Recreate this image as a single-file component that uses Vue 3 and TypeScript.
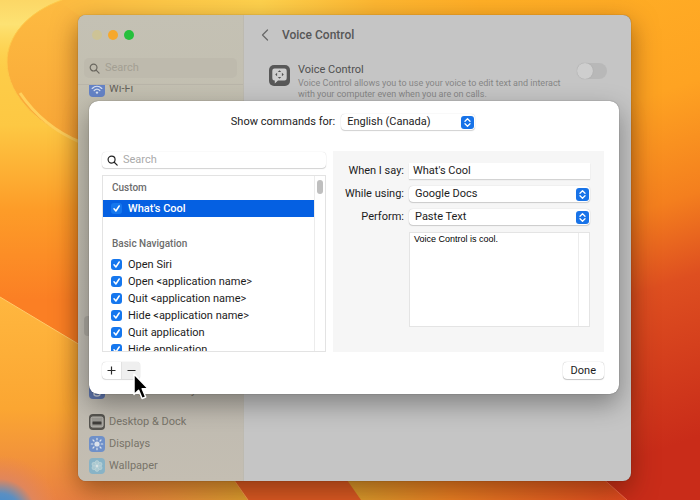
<script setup lang="ts">
import { ref } from 'vue'

interface Command {
  name: string
  enabled: boolean
}
interface CommandGroup {
  title: string
  commands: Command[]
}

const groups = ref<CommandGroup[]>([
  { title: 'Custom', commands: [{ name: "What's Cool", enabled: true }] },
  {
    title: 'Basic Navigation',
    commands: [
      { name: 'Open Siri', enabled: true },
      { name: 'Open <application name>', enabled: true },
      { name: 'Quit <application name>', enabled: true },
      { name: 'Hide <application name>', enabled: true },
      { name: 'Quit application', enabled: true },
      { name: 'Hide application', enabled: true },
    ],
  },
])

const selected = ref("What's Cool")
const language = ref('English (Canada)')
const phrase = ref("What's Cool")
const appName = ref('Google Docs')
const action = ref('Paste Text')
const pasteText = ref('Voice Control is cool.')
const voiceControl = ref(false)
</script>

<template>
  <div class="desktop">
    <svg class="wallpaper" viewBox="0 0 700 500" preserveAspectRatio="none" aria-hidden="true">
      <defs>
        <linearGradient id="base" x1="0" y1="0" x2="0" y2="1">
          <stop offset="0" stop-color="#fdd24e" />
          <stop offset=".25" stop-color="#fdc843" />
          <stop offset=".42" stop-color="#fd9c28" />
          <stop offset=".6" stop-color="#fb7f24" />
        </linearGradient>
        <linearGradient id="topband" x1="60" y1="0" x2="480" y2="0" gradientUnits="userSpaceOnUse">
          <stop offset="0" stop-color="#fdbb41" />
          <stop offset=".25" stop-color="#fdc847" />
          <stop offset=".48" stop-color="#fed24d" />
          <stop offset=".75" stop-color="#fdb731" />
          <stop offset="1" stop-color="#ffae26" />
        </linearGradient>
        <linearGradient id="blob" x1="0" y1="0" x2="0" y2="1">
          <stop offset="0" stop-color="#fdbb41" />
          <stop offset="1" stop-color="#f9a637" />
        </linearGradient>
        <linearGradient id="right" x1="0" y1="0" x2=".15" y2="1">
          <stop offset="0" stop-color="#ffb026" />
          <stop offset=".3" stop-color="#fea322" />
          <stop offset=".52" stop-color="#f47f1e" />
          <stop offset=".68" stop-color="#de4f20" />
          <stop offset="1" stop-color="#c92c19" />
        </linearGradient>
        <linearGradient id="lower" x1="0" y1="297" x2="0" y2="500" gradientUnits="userSpaceOnUse">
          <stop offset="0" stop-color="#ffb73f" />
          <stop offset=".55" stop-color="#fba632" />
          <stop offset="1" stop-color="#ea8242" />
        </linearGradient>
        <linearGradient id="floor" x1="78" y1="0" x2="248" y2="0" gradientUnits="userSpaceOnUse">
          <stop offset="0" stop-color="#ee9440" stop-opacity="0" />
          <stop offset="1" stop-color="#dfa32f" />
        </linearGradient>
        <linearGradient id="bottom" x1="0" y1="0" x2="1" y2="0">
          <stop offset="0" stop-color="#d9a62f" />
          <stop offset=".4" stop-color="#ec8124" />
          <stop offset="1" stop-color="#e04a20" />
        </linearGradient>
        <radialGradient id="corner" cx="0" cy="515" r="60" gradientUnits="userSpaceOnUse">
          <stop offset="0" stop-color="#2f8ad8" />
          <stop offset=".36" stop-color="#5b8fc2" />
          <stop offset=".6" stop-color="#e0865c" />
          <stop offset="1" stop-color="#ea8650" stop-opacity="0" />
        </radialGradient>
        <linearGradient id="glow" x1="0" y1="0" x2="0" y2="1">
          <stop offset="0" stop-color="#fcd766" />
          <stop offset=".35" stop-color="#fde273" />
          <stop offset="1" stop-color="#fdd24e" stop-opacity="0" />
        </linearGradient>
      </defs>
      <rect width="700" height="500" fill="url(#base)" />
      <rect width="80" height="70" fill="url(#glow)" />
      <path d="M62 0C28 12 7 36 7 62c0 36 36 66 73 80h40V0z" fill="url(#blob)" />
      <rect x="60" width="640" height="40" fill="url(#topband)" />
      <path d="M62 0C28 12 7 36 7 62c0 36 36 66 73 80V16L60 2z" fill="url(#blob)" />
      <path d="M62 0C28 12 7 36 7 62c0 36 36 66 73 80" fill="none" stroke="#fdca4a" stroke-width="1" />
      <path d="M20 93c15 22 36 39 60 49" fill="none" stroke="#ffd05c" stroke-width="3" />
      <rect x="480" width="220" height="500" fill="url(#right)" />
      <path d="M0 297l77 46 170 157H0z" fill="url(#lower)" />
      <path d="M0 297l80 48" stroke="#ffc968" stroke-width="1" />
      <path d="M78 460h142l28 40H78z" fill="url(#floor)" />
      <path d="M220 460l28 40h115l-30-40z" fill="#dc5a24" />
      <path d="M220 460l28 40" stroke="#f5a050" stroke-width="1" />
      <path d="M333 460l28 40h266l-45-40z" fill="url(#bottom)" />
      <path d="M582 460l45 40" stroke="#ef6a4c" stroke-width="1" />
      <rect y="440" width="80" height="60" fill="url(#corner)" />
    </svg>

    <div class="window">
      <aside class="sidebar">
        <div class="lights">
          <button class="light close" type="button" aria-label="Close"></button>
          <button class="light minimise" type="button" aria-label="Minimise"></button>
          <button class="light expand" type="button" aria-label="Zoom"></button>
        </div>
        <label class="side-search">
          <svg viewBox="0 0 12 12" aria-hidden="true">
            <circle cx="5" cy="5" r="3.7" />
            <path d="M7.8 7.8l3.2 3.2" />
          </svg>
          <input type="search" placeholder="Search" aria-label="Search" />
        </label>
        <nav class="side-list">
          <a class="side-item first" href="#">
            <svg class="tile" viewBox="0 0 16 16" aria-hidden="true">
              <rect width="16" height="16" rx="4" fill="#6583c6" />
              <g fill="none" stroke="#d9e0ee" stroke-width="1.3" stroke-linecap="round">
                <path d="M3.2 7.4c2.8-2.6 6.800-2.6 9.600 0" />
                <path d="M5.2 9.5c1.6-1.5 4-1.5 5.6 0" />
              </g>
              <circle cx="8" cy="11.6" r="1.2" fill="#d9e0ee" />
            </svg>
            <span class="near">Wi-Fi</span>
          </a>
          <div class="side-selection"></div>
          <a class="side-item privacy" href="#">
            <svg class="tile" viewBox="0 0 16 16" aria-hidden="true">
              <rect width="16" height="16" rx="4" fill="#5d74ac" />
              <path d="M5 6v5c0 1 1 2 3 2s3-1 3-2V6" fill="none" stroke="#c4cbd8" stroke-width="1.5" />
            </svg>
            <span>Privacy &amp; Security</span>
          </a>
          <a class="side-item" href="#">
            <svg class="tile" viewBox="0 0 16 16" aria-hidden="true">
              <rect width="16" height="16" rx="4" fill="#56544f" />
              <rect x="2" y="3" width="12" height="10" rx="1.5" fill="#9a9892" stroke="#bdbab4" />
              <rect x="3.5" y="7.500" width="9" height="3" rx=".5" fill="#403e3b" />
            </svg>
            <span>Desktop &amp; Dock</span>
          </a>
          <a class="side-item" href="#">
            <svg class="tile" viewBox="0 0 16 16" aria-hidden="true">
              <rect width="16" height="16" rx="4" fill="#6f90c9" />
              <circle cx="8" cy="8" r="2.600" fill="#dbe2ec" />
              <path d="M8 2.300v1.500M8 12.200v1.500M2.300 8h1.500M12.200 8h1.500M4 4l1 1M11 11l1 1M12 4l-1 1M5 11l-1 1" stroke="#dbe2ec" stroke-width="1.200" stroke-linecap="round" />
            </svg>
            <span>Displays</span>
          </a>
          <a class="side-item" href="#">
            <svg class="tile" viewBox="0 0 16 16" aria-hidden="true">
              <rect width="16" height="16" rx="4" fill="#88b3c6" />
              <g fill="#a9c8d0" stroke="#c3d6da" stroke-width=".6">
                <circle cx="8" cy="4.500" r="1.900" />
                <circle cx="8" cy="11.500" r="1.900" />
                <circle cx="4.900" cy="6.200" r="1.900" />
                <circle cx="11.100" cy="6.200" r="1.900" />
                <circle cx="4.900" cy="9.800" r="1.900" />
                <circle cx="11.100" cy="9.800" r="1.900" />
              </g>
              <circle cx="8" cy="8" r="1.500" fill="#d8e2e3" />
            </svg>
            <span>Wallpaper</span>
          </a>
        </nav>
      </aside>

      <main class="main">
        <header class="titlebar">
          <button class="back" type="button" aria-label="Back">
            <svg viewBox="0 0 8 12" aria-hidden="true"><path d="M6.500 1L1.500 6l5 5" /></svg>
          </button>
          <h1>Voice Control</h1>
        </header>
        <section class="feature">
          <svg class="feature-icon" viewBox="0 0 21 21" aria-hidden="true">
            <rect width="21" height="21" rx="5" fill="#585858" />
            <path d="M5.500 3.500h10a2.200 2.200 0 0 1 2.200 2.200v7.600a2.200 2.200 0 0 1-2.200 2.200H9l-3.200 3v-3h-.3a2.200 2.200 0 0 1-2.200-2.200V5.700a2.200 2.200 0 0 1 2.200-2.200z" fill="#cfcfcf" />
            <path d="M10.500 5.200l1.700 1.900H8.800zM10.500 13.800l1.700-1.900H8.800zM6.200 9.500l1.900-1.700v3.400zM14.800 9.500l-1.900-1.700v3.400z" fill="#555" />
          </svg>
          <div class="feature-text">
            <label for="vc-toggle">Voice Control</label>
            <p>Voice Control allows you to use your voice to edit text and interact with your computer even when you are on calls.</p>
          </div>
          <input id="vc-toggle" v-model="voiceControl" class="toggle" type="checkbox" role="switch" />
        </section>
      </main>

      <div class="dialog" role="dialog" aria-label="Commands">
        <div class="language">
          <label for="language">Show commands for:</label>
          <div class="popup">
            <select id="language" v-model="language">
              <option>English (Canada)</option>
            </select>
            <svg class="chevrons" viewBox="0 0 13 13" aria-hidden="true">
              <rect width="13" height="13" rx="3" />
              <path d="M4 5.200l2.500-2.400L9 5.200M4 7.800l2.500 2.400L9 7.800" />
            </svg>
          </div>
        </div>

        <div class="body">
          <div class="left">
            <label class="search">
              <svg viewBox="0 0 12 12" aria-hidden="true">
                <circle cx="5" cy="5" r="3.800" />
                <path d="M7.900 7.900l3.200 3.200" />
              </svg>
              <input type="search" placeholder="Search" aria-label="Search commands" />
            </label>
            <div class="commands">
              <div class="rows">
                <section v-for="group in groups" :key="group.title" class="group">
                  <h2>{{ group.title }}</h2>
                  <label
                    v-for="command in group.commands"
                    :key="command.name"
                    class="row"
                    :class="{ selected: command.name === selected }"
                  >
                    <input v-model="command.enabled" type="checkbox" />
                    <span>{{ command.name }}</span>
                  </label>
                </section>
              </div>
              <div class="track"><div class="thumb"></div></div>
            </div>
          </div>

          <form class="panel" @submit.prevent>
            <label for="phrase">When I say:</label>
            <input id="phrase" v-model="phrase" class="field" type="text" />
            <label for="app">While using:</label>
            <div class="popup">
              <select id="app" v-model="appName">
                <option>Google Docs</option>
              </select>
              <svg class="chevrons" viewBox="0 0 13 13" aria-hidden="true">
                <rect width="13" height="13" rx="3" />
                <path d="M4 5.200l2.500-2.400L9 5.200M4 7.800l2.500 2.400L9 7.800" />
              </svg>
            </div>
            <label for="action">Perform:</label>
            <div class="popup">
              <select id="action" v-model="action">
                <option>Paste Text</option>
              </select>
              <svg class="chevrons" viewBox="0 0 13 13" aria-hidden="true">
                <rect width="13" height="13" rx="3" />
                <path d="M4 5.200l2.500-2.400L9 5.200M4 7.800l2.500 2.400L9 7.800" />
              </svg>
            </div>
            <div class="paste">
              <textarea v-model="pasteText" aria-label="Text to paste" spellcheck="false"></textarea>
              <div class="paste-track"></div>
            </div>
          </form>
        </div>

        <footer class="footer">
          <div class="segmented">
            <button type="button" aria-label="Add">
              <svg viewBox="0 0 9 9" aria-hidden="true"><path d="M4.500 .500v8M.500 4.500h8" /></svg>
            </button>
            <button class="pressed" type="button" aria-label="Remove">
              <svg viewBox="0 0 9 9" aria-hidden="true"><path d="M.500 4.500h8" /></svg>
            </button>
          </div>
          <button class="done" type="button">Done</button>
          <svg class="cursor" viewBox="0 0 17 30" aria-hidden="true">
            <path d="M2 2v20.500l4.600-4.300 3.500 8.300 3.600-1.500-3.500-8.200h6z" />
          </svg>
        </footer>
      </div>
    </div>
  </div>
</template>

<style>
body {
  margin: 0;
}
</style>

<style scoped>
.desktop {
  position: relative;
  box-sizing: border-box;
  display: flex;
  min-height: 100vh;
  padding: 15px 69px 19px 78px;
  overflow: hidden;
  font-family: Roboto, Inter, sans-serif;
  font-size: 11px;
  line-height: 16px;
  color: #1c1c1c;
}
.wallpaper {
  position: absolute;
  inset: 0;
  width: 100%;
  height: 100%;
}
button,
input,
select,
textarea {
  box-sizing: border-box;
  margin: 0;
  padding: 0;
  border: 0;
  outline: 0;
  background: none;
  font: inherit;
  color: inherit;
  appearance: none;
}
h1,
h2,
p {
  margin: 0;
}
svg {
  display: block;
  flex: none;
}

.window {
  position: relative;
  display: grid;
  grid-template-columns: 166px 1fr;
  flex: 1;
  min-width: 0;
  border-radius: 8px;
  background: #c5c5c5;
  box-shadow:
    0 0 1px rgba(0, 0, 0, 0.5),
    0 9px 26px rgba(70, 25, 0, 0.5);
}
.sidebar {
  display: flex;
  flex-direction: column;
  min-width: 0;
  border-right: 1px solid #bdbab0;
  border-radius: 8px 0 0 8px;
  background: linear-gradient(#c4c1b4, #c2beaf 25%, #bdb9b0 75%, #c4beb2);
}
.lights {
  display: flex;
  gap: 6px;
  padding: 15px 14px 22px;
}
.light {
  width: 10px;
  height: 10px;
  border-radius: 50%;
}
.close {
  background: #cdc396;
}
.minimise {
  background: #f6a82c;
}
.expand {
  background: #25c03c;
}
.side-search {
  display: flex;
  align-items: center;
  gap: 5px;
  height: 20px;
  margin: -4px 6px 6px;
  padding: 0 5px;
  border-radius: 5px;
  background: #bebaad;
}
.side-search svg,
.search svg {
  width: 11px;
  height: 11px;
  fill: none;
  stroke: #6a675f;
  stroke-width: 1.3;
  stroke-linecap: round;
}
.side-search input,
.search input {
  flex: 1;
  min-width: 0;
}
.side-search input::placeholder {
  color: #a39f93;
  opacity: 1;
}
.side-list {
  display: flex;
  flex: 1;
  flex-direction: column;
  min-height: 0;
  padding: 0 7px 4px 11px;
  overflow: hidden;
  border-top: 1px solid #b9b5a9;
}
.side-item {
  display: flex;
  flex: none;
  align-items: center;
  gap: 4px;
  height: 22px;
  color: #787469;
  text-decoration: none;
}
.side-item.first {
  margin-top: -7px;
}
.near {
  color: #65625a;
}
.tile {
  width: 16px;
  height: 16px;
}
.side-selection {
  flex: none;
  height: 20px;
  margin: auto 0 44px -5px;
  border-radius: 4px;
  background: #aaa69e;
}
.privacy {
  margin-bottom: 9px;
}

.main {
  min-width: 0;
  padding: 0 24px 0 15px;
}
.titlebar {
  display: flex;
  align-items: center;
  gap: 12px;
  height: 40px;
}
.back {
  width: 11px;
  height: 16px;
  padding: 2px;
}
.back svg {
  width: 8px;
  height: 12px;
  fill: none;
  stroke: #6a6a6a;
  stroke-width: 1.3;
  stroke-linecap: round;
  stroke-linejoin: round;
}
.titlebar h1 {
  font-size: 12px;
  font-weight: 500;
  color: #575757;
}
.feature {
  display: flex;
  gap: 8px;
  padding: 7px 0 0 10px;
}
.feature-icon {
  width: 21px;
  height: 21px;
  margin-top: 3px;
}
.feature-text {
  flex: 1;
  min-width: 0;
  color: #505050;
}
.feature-text label {
  display: block;
}
.feature-text p {
  font-size: 9px;
  line-height: 11px;
  color: #858585;
}
.toggle {
  display: flex;
  align-items: center;
  flex: none;
  width: 30px;
  height: 16px;
  margin-top: 1px;
  border-radius: 8px;
  background: #b8b8b8;
}
.toggle::before {
  width: 16px;
  height: 16px;
  border-radius: 50%;
  background: #cecece;
  box-shadow: 0 0 1px #999;
  content: "";
}
.toggle:checked {
  justify-content: flex-end;
}

.dialog {
  position: absolute;
  top: 86px;
  right: 12px;
  left: 11px;
  box-sizing: border-box;
  padding: 13px 15px 15px 13px;
  border-radius: 9px;
  background: #fff;
  box-shadow:
    0 0 1px rgba(0, 0, 0, 0.6),
    0 10px 26px rgba(0, 0, 0, 0.35);
}
.language {
  display: flex;
  gap: 6px;
  justify-content: center;
  margin-bottom: 21px;
}
.language .popup {
  width: 134px;
}
.popup {
  display: grid;
  align-items: center;
  height: 16px;
  border-radius: 4px;
  background: #fff;
  box-shadow:
    0 0 1px rgba(0, 0, 0, 0.25),
    0 1px 1px rgba(0, 0, 0, 0.16);
}
.popup select {
  grid-area: 1 / 1;
  width: 100%;
  height: 16px;
  padding: 0 20px 0 6px;
}
.chevrons {
  grid-area: 1 / 1;
  justify-self: end;
  width: 13px;
  height: 13px;
  margin-right: 1px;
  pointer-events: none;
}
.chevrons rect {
  fill: #1873e8;
}
.chevrons path {
  fill: none;
  stroke: #fff;
  stroke-width: 1.3;
  stroke-linecap: round;
  stroke-linejoin: round;
}

.body {
  display: grid;
  grid-template-columns: 224px 1fr;
  gap: 7px;
  height: 201px;
}
.left {
  display: flex;
  flex-direction: column;
  gap: 7px;
  min-height: 0;
  padding-top: 1px;
}
.search {
  display: flex;
  align-items: center;
  gap: 5px;
  height: 16px;
  padding: 0 5px;
  border-radius: 4px;
  box-shadow:
    0 0 1px rgba(0, 0, 0, 0.2),
    0 1px 1px rgba(0, 0, 0, 0.16);
}
.search svg {
  stroke: #222;
}
.search input::placeholder {
  color: #aaa;
  opacity: 1;
}
.commands {
  display: flex;
  flex: 1;
  min-height: 0;
  border: 1px solid #e3e3e3;
}
.rows {
  flex: 1;
  overflow: hidden;
}
.group + .group {
  margin-top: 15px;
}
.group h2 {
  padding-left: 9px;
  font-size: 10px;
  font-weight: 500;
  line-height: 24px;
  color: #6c6c6c;
}
.row {
  display: flex;
  align-items: center;
  gap: 6px;
  height: 17px;
  padding-left: 8px;
}
.row.selected {
  background: #0560e2;
  color: #fff;
  font-weight: 500;
}
.row input {
  width: 11px;
  height: 11px;
  border-radius: 3px;
  box-shadow: inset 0 0 0 1px #bbb;
}
.row input:checked {
  background: #1577ee url("data:image/svg+xml,%3Csvg xmlns='http://www.w3.org/2000/svg' viewBox='0 0 11 11'%3E%3Cpath d='M3 5.800l1.900 2.200L8.200 3' fill='none' stroke='white' stroke-width='1.500' stroke-linecap='round' stroke-linejoin='round'/%3E%3C/svg%3E");
  box-shadow: none;
}
.track {
  width: 11px;
  padding: 4px 2px;
  box-sizing: border-box;
  border-left: 1px solid #ececec;
}
.thumb {
  height: 14px;
  border-radius: 3px;
  background: #bfbfbf;
}

.panel {
  display: grid;
  grid-template-columns: 71px 1fr;
  grid-template-rows: 16px 16px 16px 1fr;
  gap: 7px 5px;
  padding: 12px 14px 25px 0;
  background: #f6f6f6;
}
.panel label {
  text-align: right;
  white-space: nowrap;
}
.field {
  width: 100%;
  height: 16px;
  padding: 0 4px;
  background: #fff;
  box-shadow: 0 1px 1px rgba(0, 0, 0, 0.14);
}
.paste {
  display: flex;
  grid-column: 2;
  border: 1px solid #e4e4e4;
  background: #fff;
}
.paste textarea {
  flex: 1;
  min-width: 0;
  padding: 0 4px;
  resize: none;
  font-family: "Liberation Sans", Arial, sans-serif;
  font-size: 9px;
  line-height: 12px;
  color: #000;
}
.paste-track {
  width: 10px;
  border-left: 1px solid #ececec;
}

.footer {
  position: relative;
  display: flex;
  align-items: center;
  justify-content: space-between;
  margin-top: 10px;
}
.segmented {
  display: flex;
  overflow: hidden;
  border-radius: 4px;
  box-shadow:
    0 0 1px rgba(0, 0, 0, 0.3),
    0 1px 1px rgba(0, 0, 0, 0.12);
}
.segmented button {
  display: grid;
  place-items: center;
  width: 19px;
  height: 17px;
}
.segmented .pressed {
  border-left: 1px solid #e2e2e2;
  background: #efefef;
}
.segmented svg {
  width: 9px;
  height: 9px;
  stroke: #2b2b2b;
  stroke-width: 1.2;
}
.done {
  height: 17px;
  padding: 0 8px;
  border-radius: 4px;
  background: #fff;
  box-shadow:
    0 0 1px rgba(0, 0, 0, 0.35),
    0 1px 1px rgba(0, 0, 0, 0.2);
}
.cursor {
  position: absolute;
  top: 10px;
  left: 30px;
  width: 17px;
  height: 30px;
  pointer-events: none;
}
.cursor path {
  fill: #000;
  stroke: #fff;
  stroke-width: 1.5;
  stroke-linejoin: round;
}
</style>
